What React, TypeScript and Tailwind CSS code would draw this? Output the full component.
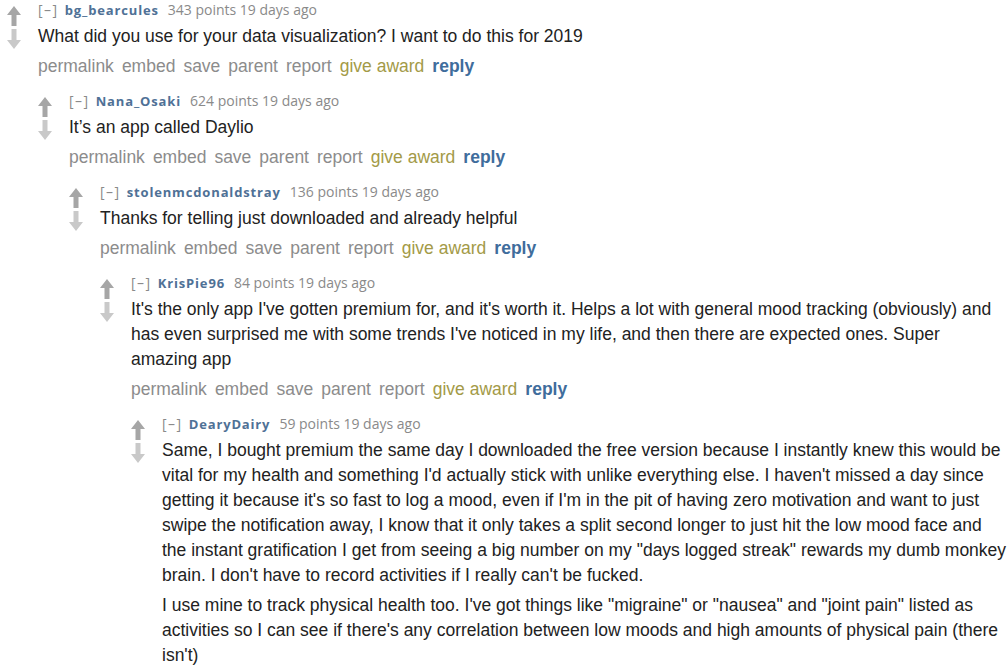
import type { ReactNode } from 'react'

interface CommentItem {
  id: string
  author: string
  points: number
  age: string
  body: ReactNode[]
  children?: CommentItem[]
}

const THREAD: CommentItem = {
  id: 'c1',
  author: 'bg_bearcules',
  points: 343,
  age: '19 days ago',
  body: ['What did you use for your data visualization? I want to do this for 2019'],
  children: [
    {
      id: 'c2',
      author: 'Nana_Osaki',
      points: 624,
      age: '19 days ago',
      body: ['It’s an app called Daylio'],
      children: [
        {
          id: 'c3',
          author: 'stolenmcdonaldstray',
          points: 136,
          age: '19 days ago',
          body: ['Thanks for telling just downloaded and already helpful'],
          children: [
            {
              id: 'c4',
              author: 'KrisPie96',
              points: 84,
              age: '19 days ago',
              body: [
                "It's the only app I've gotten premium for, and it's worth it. Helps a lot with general mood tracking (obviously) and has even surprised me with some trends I've noticed in my life, and then there are expected ones. Super amazing app"
              ],
              children: [
                {
                  id: 'c5',
                  author: 'DearyDairy',
                  points: 59,
                  age: '19 days ago',
                  body: [
                    'Same, I bought premium the same day I downloaded the free version because I instantly knew this would be vital for my health and something I\'d actually stick with unlike everything else. I haven\'t missed a day since getting it because it\'s so fast to log a mood, even if I\'m in the pit of having zero motivation and want to just swipe the notification away, I know that it only takes a split second longer to just hit the low mood face and the instant gratification I get from seeing a big number on my "days logged streak" rewards my dumb monkey brain. I don\'t have to record activities if I really can\'t be fucked.',
                    'I use mine to track physical health too. I\'ve got things like "migraine" or "nausea" and "joint pain" listed as activities so I can see if there\'s any correlation between low moods and high amounts of physical pain (there isn\'t)'
                  ]
                }
              ]
            }
          ]
        }
      ]
    }
  ]
}

// up / down vote arrows, old reddit style
function VoteArrows() {
  return (
    <svg width="14" height="44" viewBox="0 0 14 44" className="mt-[6px] block">
      <polygon points="7,0 14,9 9.5,9 9.5,20 4.5,20 4.5,9 0,9" fill="#a6a6a6" />
      <polygon points="4.5,23 9.5,23 9.5,34 14,34 7,43 0,34 4.5,34" fill="#c9c9c9" />
    </svg>
  )
}

function Comment({ comment }: { comment: CommentItem }) {
  return (
    <div className="flex">
      <div className="w-[31px] shrink-0">
        <VoteArrows />
      </div>
      <div className="min-w-0 flex-1">
        <div className="flex h-[20px] items-center whitespace-nowrap font-['Open_Sans',sans-serif] text-[14px] leading-[20px]">
          <span className="tracking-[1.5px] text-[#8a8a8a]">[–]</span>
          <span className="ml-[6px] text-[13px] font-bold tracking-[0.85px] text-[#4f7196]">{comment.author}</span>
          <span className="ml-[9px] text-[#8a8a8a]">
            {comment.points} points {comment.age}
          </span>
        </div>
        <div className="mt-[4px] font-['Liberation_Sans',Arial,sans-serif] text-[17.5px] leading-[25px] text-[#222]">
          {comment.body.map((para, idx) => (
            <p key={idx} className="mb-[5px]">
              {para}
            </p>
          ))}
        </div>
        <div className="flex gap-[8px] font-['Liberation_Sans',Arial,sans-serif] text-[17.5px] leading-[24px] text-[#8c8c8c]">
          <span>permalink</span>
          <span>embed</span>
          <span>save</span>
          <span>parent</span>
          <span>report</span>
          <span className="text-[#a39a47]">give award</span>
          <span className="font-bold text-[#3f6d9c]">reply</span>
        </div>
        {comment.children && comment.children.length > 0 && (
          <div className="mt-[13px]">
            {comment.children.map(child => (
              <Comment key={child.id} comment={child} />
            ))}
          </div>
        )}
      </div>
    </div>
  )
}

export default function App() {
  return (
    <div className="min-h-screen w-[1007px] overflow-hidden bg-white pl-[7px]">
      <Comment comment={THREAD} />
    </div>
  )
}
